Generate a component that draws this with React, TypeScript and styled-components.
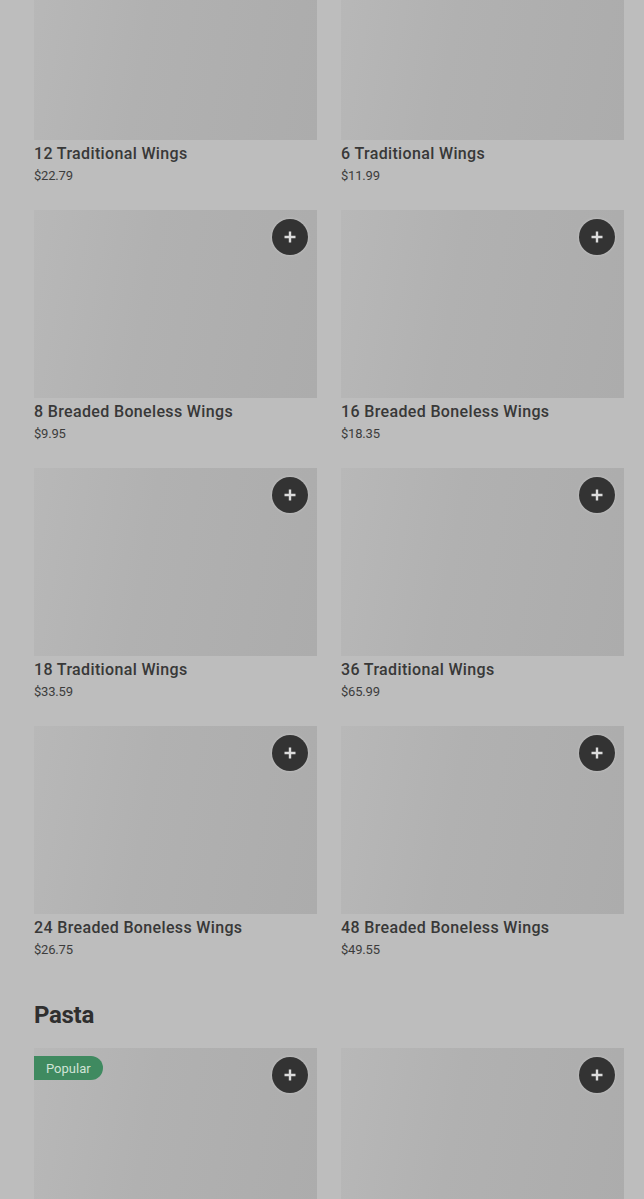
import React from "react";
import styled, { createGlobalStyle } from "styled-components";

const Global = createGlobalStyle`
  html, body { margin: 0; padding: 0; background: #bdbdbd; }
  body { font-family: Roboto, "Liberation Sans", Arial, sans-serif; overflow: hidden; }
`;

const Page = styled.main`
  padding: 0 20px 0 34px;
  margin-top: -48px;
`;

const Section = styled.section`
  display: flex;
  flex-direction: column;
`;

const Heading = styled.h2`
  margin: 39px 0 17px;
  font-size: 24px;
  line-height: 32px;
  font-weight: 700;
  color: #2f2f2f;
  letter-spacing: -0.3px;
`;

const Grid = styled.div`
  display: grid;
  grid-template-columns: 283px 283px;
  column-gap: 24px;
  row-gap: 24px;
`;

const Card = styled.article`
  display: flex;
  flex-direction: column;
`;

const Image = styled.div`
  position: relative;
  height: 188px;
  background: linear-gradient(100deg, #b8b8b8 0%, #b1b1b1 40%, #acacac 100%);
`;

const AddButton = styled.button`
  position: absolute;
  top: 9px;
  right: 9px;
  width: 36px;
  height: 36px;
  border-radius: 50%;
  border: none;
  padding: 0;
  background: #333333;
  box-shadow: 0 0 3px 0 rgba(220, 220, 220, 0.6);
  display: flex;
  align-items: center;
  justify-content: center;
`;

const Badge = styled.span`
  position: absolute;
  top: 8px;
  left: 0;
  height: 24px;
  padding: 0 12px;
  display: flex;
  align-items: center;
  background: #3f8a60;
  color: #d0e3d6;
  font-size: 13px;
  border-radius: 0 12px 12px 0;
`;

const Title = styled.div`
  margin-top: 2px;
  font-size: 16px;
  line-height: 24px;
  font-weight: 500;
  letter-spacing: 0.35px;
  color: #383838;
`;

const Price = styled.div`
  font-size: 13px;
  line-height: 20px;
  color: #3c3c3c;
  letter-spacing: -0.2px;
`;

const Plus = () => (
  <svg width="14" height="14" viewBox="0 0 14 14">
    <path d="M7 1.5v11M1.5 7h11" stroke="#dcdcdc" strokeWidth="2.4" />
  </svg>
);

type Item = { name: string; price: string; popular?: boolean };

const wings: Item[] = [
  { name: "12 Traditional Wings", price: "$22.79" },
  { name: "6 Traditional Wings", price: "$11.99" },
  { name: "8 Breaded Boneless Wings", price: "$9.95" },
  { name: "16 Breaded Boneless Wings", price: "$18.35" },
  { name: "18 Traditional Wings", price: "$33.59" },
  { name: "36 Traditional Wings", price: "$65.99" },
  { name: "24 Breaded Boneless Wings", price: "$26.75" },
  { name: "48 Breaded Boneless Wings", price: "$49.55" },
];

const pasta: Item[] = [
  { name: "", price: "", popular: true },
  { name: "", price: "" },
];

const ItemCard = ({ item }: { item: Item }) => (
  <Card>
    <Image>
      {item.popular && <Badge>Popular</Badge>}
      <AddButton aria-label="Add">
        <Plus />
      </AddButton>
    </Image>
    {item.name && <Title>{item.name}</Title>}
    {item.price && <Price>{item.price}</Price>}
  </Card>
);

export default function App() {
  return (
    <>
      <Global />
      <Page>
        <Section>
          <Grid>
            {wings.map((w) => (
              <ItemCard key={w.name} item={w} />
            ))}
          </Grid>
        </Section>
        <Section>
          <Heading>Pasta</Heading>
          <Grid>
            {pasta.map((p, i) => (
              <ItemCard key={i} item={p} />
            ))}
          </Grid>
        </Section>
      </Page>
    </>
  );
}
